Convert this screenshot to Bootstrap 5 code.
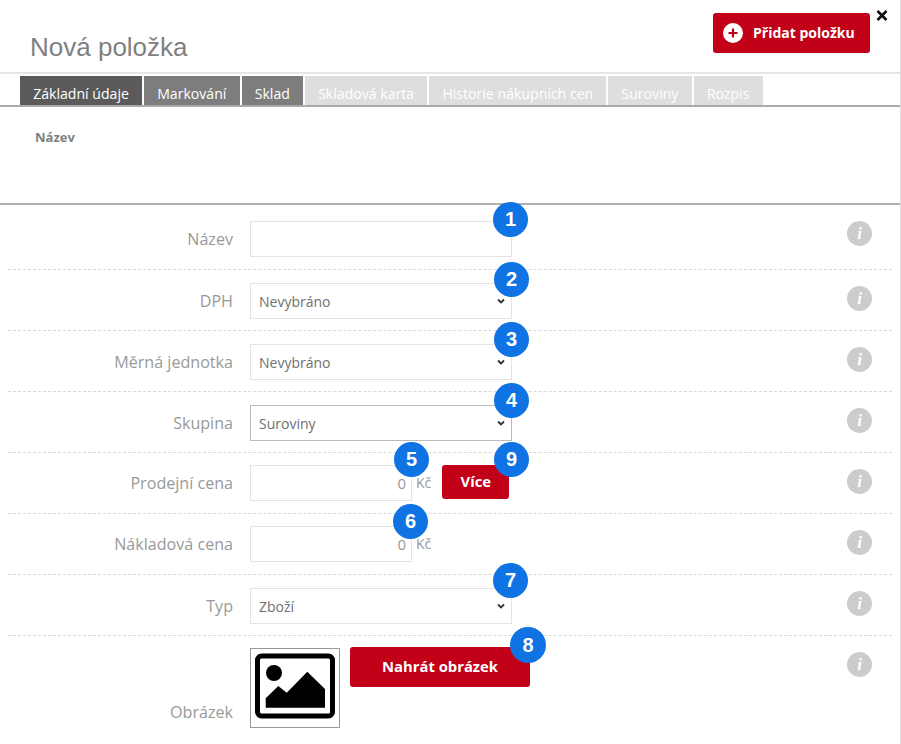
<!DOCTYPE html>
<html lang="cs">
<head>
<meta charset="utf-8">
<title>Nová položka</title>
<link rel="stylesheet" href="https://cdn.jsdelivr.net/npm/bootstrap@5.3.0/dist/css/bootstrap.min.css">
<style>
html,body{height:744px;overflow:hidden;background:#fff}
body{font-family:"Open Sans",sans-serif;color:#666}
.shell{position:relative;width:901px;height:744px;overflow:hidden;border-right:1px solid #ddd}
.head-bar{height:74px;border-bottom:2px solid #e6e6e6;padding:13px 30px 0 30px}
.page-title{font:26px/1 "Liberation Sans",sans-serif;color:#808080;margin:21px 0 0}
.btn-red{background:#c20017;border:0;border-radius:3px;color:#fff;font-weight:700;line-height:1.2}
.btn-red:hover,.btn-red:focus{background:#c20017;color:#fff}
.btn-add{width:157px;height:40px;font-size:14px;padding:0 0 0 10px;gap:10px}
.plus-ico{width:20px;height:20px;flex:none}
.close-x{position:absolute;left:876px;top:10px;width:12px;height:11px;display:block}
.tab-strip{height:33px;padding-left:20px;border-bottom:2px solid #aaa;gap:2px;flex-wrap:nowrap}
.tab-item{height:29px;line-height:35px;font-size:14.1px;color:#fff;padding:0 13.15px;white-space:nowrap;background:#7d7d7d}
.tab-item.is-current{background:#5a5a5a}
.tab-item.is-off{background:#dedede}
.name-strip{height:98px;border-bottom:2px solid #b0b0b0;padding:21px 0 0 35px;font-size:13px;font-weight:700;color:#808080;line-height:18px}
.field-rows{padding:0 8px}
.field-row{height:61px;padding-top:13px;border-bottom:1px dashed #d8d8d8;position:relative}
.field-row.first{height:65px;padding-top:16px}
.field-row.tight{padding-top:12px}
.field-row.last{border-bottom:0;height:110px;padding-top:12px}
.field-label{width:225px;text-align:right;font-size:16.1px;color:#999;line-height:36px;flex:none;margin-right:17px}
.field-wrap{position:relative;width:262px;flex:none}
.field-ctl{height:36px;border:1px solid #e3e3e3;border-radius:0;font-size:14px;color:#707070;padding:0 8px;box-shadow:none}
.form-select.field-ctl{background-image:url("data:image/svg+xml,%3csvg xmlns='http://www.w3.org/2000/svg' viewBox='0 0 16 12'%3e%3cpath fill='none' stroke='%23333' stroke-width='3.6' d='M2 3l6 6 6-6'/%3e%3c/svg%3e");background-position:right 6px center;background-size:8px 6px;padding-right:20px}
.field-ctl.is-strong{border-color:#bbb}
.price-ctl{width:162px;text-align:right;padding-right:5px;font-size:15px}
.price-ctl::placeholder{color:#999;opacity:1}
.unit{font-size:14px;color:#999;margin-left:4px;line-height:36px}
.btn-more{width:67px;height:34px;font-size:14.8px;margin:0 0 0 11px;padding:0;flex:none}
.info-dot{position:absolute;left:839px;top:16px;width:25px;height:25px;border-radius:50%;background:#ccc;color:#fff;font:italic 700 17px/25px "Liberation Serif",serif;text-align:center}
.pic-box{width:90px;height:80px;border:1px solid #999;flex:none;display:flex;align-items:center;justify-content:center}
.btn-upload{width:180px;height:40px;font-size:14.8px;margin:-1px 0 0 10px;padding:0;flex:none}
.num-pin{position:absolute;width:35px;height:35px;border-radius:50%;background:#0f73e4;color:#fff;font:700 20px/35px "Liberation Sans",sans-serif;text-align:center;z-index:2}
.pin1{left:243px;top:-19px}
.pin2{left:244px;top:-21px}
.pin3{left:244px;top:-22px}
.pin4{left:244px;top:-22px}
.pin5{left:144px;top:-23px}
.pin9{left:244px;top:-23px}
.pin6{left:143px;top:-22px}
.pin7{left:243px;top:-25px}
.pin8{left:260px;top:-21px;width:36px;height:36px;line-height:36px}
.low-label{align-self:flex-start;line-height:20px;padding-bottom:6px;height:80px;display:flex;align-items:flex-end;justify-content:flex-end}
</style>
</head>
<body>
<div class="shell">
  <div class="head-bar d-flex justify-content-between align-items-start">
    <h1 class="page-title">Nová položka</h1>
    <button type="button" class="btn btn-red btn-add d-flex align-items-center">
      <svg class="plus-ico" viewBox="0 0 20 20"><circle cx="10" cy="10" r="10" fill="#fff"/><path d="M10 5.5v9M5.5 10h9" stroke="#c20017" stroke-width="2.2"/></svg>
      Přidat položku
    </button>
  </div>
  <svg class="close-x" viewBox="0 0 12 11"><path d="M1.5 1l9 9M10.5 1l-9 9" stroke="#111" stroke-width="2.6"/></svg>

  <div class="tab-strip d-flex align-items-end">
    <div class="tab-item is-current">Základní údaje</div>
    <div class="tab-item">Markování</div>
    <div class="tab-item">Sklad</div>
    <div class="tab-item is-off">Skladová karta</div>
    <div class="tab-item is-off">Historie nákupních cen</div>
    <div class="tab-item is-off">Suroviny</div>
    <div class="tab-item is-off">Rozpis</div>
  </div>

  <div class="name-strip">Název</div>

  <div class="field-rows">
    <div class="field-row first d-flex">
      <label class="field-label">Název</label>
      <div class="field-wrap">
        <input class="form-control field-ctl" type="text">
        <span class="num-pin pin1">1</span>
      </div>
      <span class="info-dot">i</span>
    </div>
    <div class="field-row d-flex">
      <label class="field-label">DPH</label>
      <div class="field-wrap">
        <select class="form-select field-ctl"><option>Nevybráno</option></select>
        <span class="num-pin pin2">2</span>
      </div>
      <span class="info-dot">i</span>
    </div>
    <div class="field-row d-flex">
      <label class="field-label">Měrná jednotka</label>
      <div class="field-wrap">
        <select class="form-select field-ctl"><option>Nevybráno</option></select>
        <span class="num-pin pin3">3</span>
      </div>
      <span class="info-dot">i</span>
    </div>
    <div class="field-row d-flex">
      <label class="field-label">Skupina</label>
      <div class="field-wrap">
        <select class="form-select field-ctl is-strong"><option>Suroviny</option></select>
        <span class="num-pin pin4">4</span>
      </div>
      <span class="info-dot">i</span>
    </div>
    <div class="field-row tight d-flex">
      <label class="field-label">Prodejní cena</label>
      <div class="field-wrap d-flex align-items-start">
        <input class="form-control field-ctl price-ctl" type="text" placeholder="0">
        <span class="unit">Kč</span>
        <button type="button" class="btn btn-red btn-more">Více</button>
        <span class="num-pin pin5">5</span>
        <span class="num-pin pin9">9</span>
      </div>
      <span class="info-dot">i</span>
    </div>
    <div class="field-row tight d-flex">
      <label class="field-label">Nákladová cena</label>
      <div class="field-wrap d-flex align-items-start">
        <input class="form-control field-ctl price-ctl" type="text" placeholder="0">
        <span class="unit">Kč</span>
        <span class="num-pin pin6">6</span>
      </div>
      <span class="info-dot">i</span>
    </div>
    <div class="field-row d-flex">
      <label class="field-label">Typ</label>
      <div class="field-wrap">
        <select class="form-select field-ctl"><option>Zboží</option></select>
        <span class="num-pin pin7">7</span>
      </div>
      <span class="info-dot">i</span>
    </div>
    <div class="field-row last d-flex">
      <label class="field-label low-label">Obrázek</label>
      <div class="field-wrap d-flex align-items-start">
        <div class="pic-box">
          <svg width="88" height="78" viewBox="0 0 88 78">
            <rect x="6.5" y="7" width="75" height="60" rx="4" fill="none" stroke="#000" stroke-width="5"/>
            <circle cx="23" cy="24" r="8" fill="#000"/>
            <path d="M14.7 58.7V49.3L27.3 37L35.7 43.7L56.3 22.7L74 40V58.7Z" fill="#000"/>
          </svg>
        </div>
        <button type="button" class="btn btn-red btn-upload">Nahrát obrázek</button>
        <span class="num-pin pin8">8</span>
      </div>
      <span class="info-dot">i</span>
    </div>
  </div>
</div>
</body>
</html>
